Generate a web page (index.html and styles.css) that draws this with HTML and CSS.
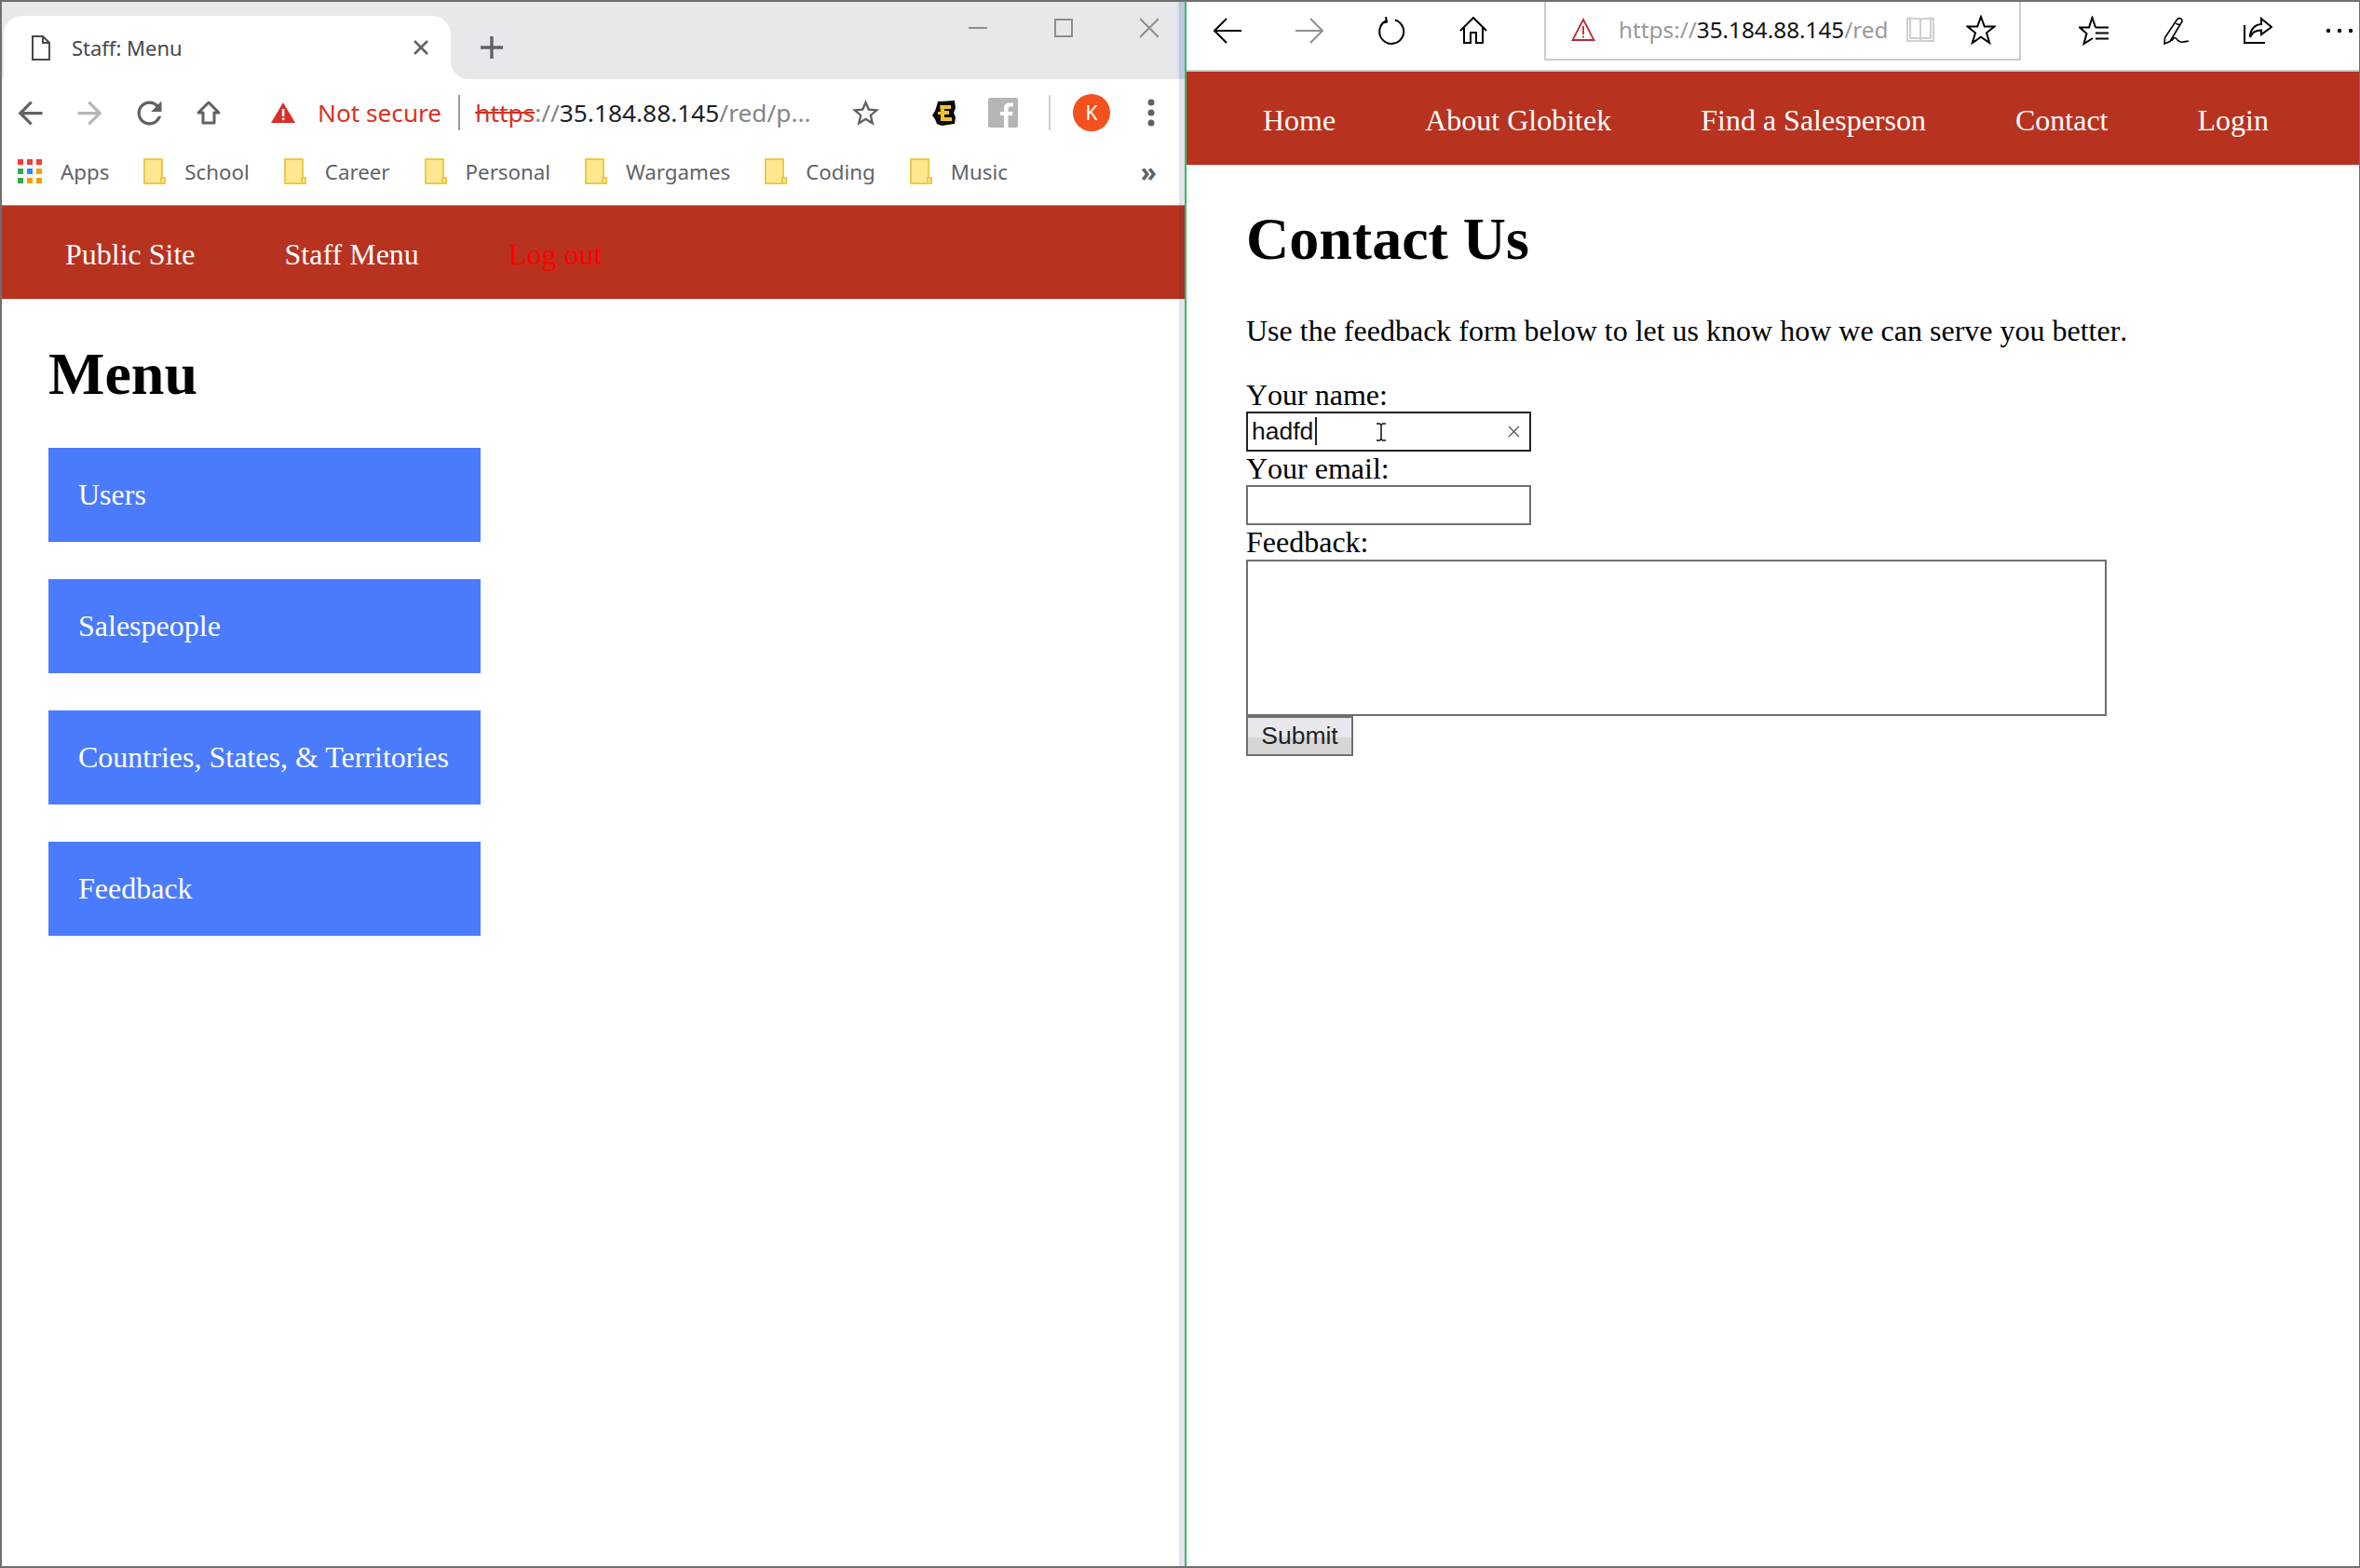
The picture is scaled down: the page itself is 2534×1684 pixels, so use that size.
FILE: index.html
```html
<!DOCTYPE html>
<html lang="en">
<head>
    <meta charset="UTF-8">
    <title>Staff: Menu / Contact Us</title>
    <link rel="stylesheet" href="styles.css">
</head>
<body>
<div class="screen">

    <!-- left window: chrome -->
    <div class="win-left">
        <div class="tabstrip">
            <div class="tab">
                <svg class="tab-doc" width="20" height="27" viewBox="0 0 20 27"><path d="M1 1H12L19 8V26H1ZM12 1V8H19" fill="none" stroke="#45484c" stroke-width="2"/></svg>
                <span class="tab-title">Staff: Menu</span>
                <svg class="tab-close" width="16" height="16" viewBox="0 0 16 16"><path d="M1 1L15 15M15 1L1 15" stroke="#5f6368" stroke-width="2.6"/></svg>
            </div>
            <svg class="tab-new" width="24" height="24" viewBox="0 0 24 24"><path d="M12 0V24M0 12H24" stroke="#5f6368" stroke-width="3.4"/></svg>
            <div class="win-controls">
                <svg width="20" height="40" viewBox="0 0 20 40"><path d="M0 20H20" stroke="#8c8e92" stroke-width="2"/></svg>
                <svg width="20" height="40" viewBox="0 0 20 40"><rect x="1" y="11" width="18" height="18" fill="none" stroke="#8c8e92" stroke-width="2"/></svg>
                <svg width="20" height="40" viewBox="0 0 20 40"><path d="M0 10L20 30M20 10L0 30" stroke="#8c8e92" stroke-width="2"/></svg>
            </div>
        </div>

        <div class="toolbar">
            <div class="tool-btn"><svg width="39" height="39" viewBox="0 0 24 24"><path fill="#5f6368" d="M20 11H7.83l5.59-5.59L12 4l-8 8 8 8 1.41-1.41L7.83 13H20v-2z"/></svg></div>
            <div class="tool-btn"><svg class="flip" width="39" height="39" viewBox="0 0 24 24"><path fill="#b5b6b8" d="M20 11H7.83l5.59-5.59L12 4l-8 8 8 8 1.41-1.41L7.83 13H20v-2z"/></svg></div>
            <div class="tool-btn"><svg width="39" height="39" viewBox="0 0 24 24"><path fill="#5f6368" d="M17.65 6.35C16.2 4.9 14.21 4 12 4c-4.42 0-7.99 3.58-7.99 8s3.57 8 7.99 8c3.73 0 6.84-2.55 7.73-6h-2.08c-.82 2.33-3.04 4-5.65 4-3.31 0-6-2.69-6-6s2.69-6 6-6c1.66 0 3.14.69 4.22 1.78L13 11h7V4l-2.35 2.35z"/></svg></div>
            <div class="tool-btn"><svg width="28" height="28" viewBox="0 0 28 28"><path d="M14 3L3 14H8V25H20V14H25Z" fill="none" stroke="#5f6368" stroke-width="3" stroke-linejoin="round"/></svg></div>

            <div class="omnibox">
                <svg width="26" height="22" viewBox="0 0 26 22"><path d="M13 0L26 22H0Z" fill="#d93025"/><rect x="11.8" y="7" width="2.6" height="8" fill="#fff"/><rect x="11.8" y="16.5" width="2.6" height="2.6" fill="#fff"/></svg>
                <span class="not-secure">Not secure</span>
                <span class="omni-sep"></span>
                <span class="url"><span class="url-https">https</span><span class="url-dim">://</span>35.184.88.145<span class="url-dim">/red/p...</span></span>
            </div>

            <div class="tool-btn tool-star"><svg width="35" height="35" viewBox="0 0 24 24"><path fill="#5f6368" d="M22 9.24l-7.19-.62L12 2 9.19 8.63 2 9.24l5.46 4.73L5.82 21 12 17.27 18.18 21l-1.63-7.03L22 9.24zM12 15.4l-3.76 2.27 1-4.28-3.32-2.88 4.38-.38L12 6.1l1.71 4.04 4.38.38-3.32 2.88 1 4.28L12 15.4z"/></svg></div>
            <div class="tool-btn tool-ext"><svg width="25" height="27" viewBox="0 0 25 27"><path d="M6 1L24 0L25 8L23 13L25 18L24 25L10 27L5 25L3 20L0 16L3 11L5 5Z" fill="#0b0b0b"/><path d="M8 5H20V9H13V11H18V15H13V18H21V22H9V15H6V12H9Z" fill="#f0c22d"/></svg></div>
            <div class="tool-btn"><svg width="32" height="32" viewBox="0 0 32 32"><rect width="32" height="32" rx="2" fill="#b5b5b5"/><path d="M17 32V19H13V15H17V11C17 7 19.500 5.500 23 5.500H27V9.500H24C22 9.500 21.500 10.300 21.500 12V15H26.500L26 19H21.500V32Z" fill="#fff"/></svg></div>
            <span class="tool-sep"></span>
            <div class="avatar">K</div>
            <div class="tool-btn tool-more"><svg width="8" height="32" viewBox="0 0 8 32"><circle cx="4" cy="5" r="3.500" fill="#5f6368"/><circle cx="4" cy="16" r="3.500" fill="#5f6368"/><circle cx="4" cy="27" r="3.500" fill="#5f6368"/></svg></div>
        </div>

        <div class="bookmarks">
            <div class="bookmark">
                <svg width="26" height="26" viewBox="0 0 26 26">
                    <rect x="0" y="0" width="6" height="6" fill="#ef3e36"/><rect x="10" y="0" width="6" height="6" fill="#ef3e36"/><rect x="20" y="0" width="6" height="6" fill="#ef3e36"/>
                    <rect x="0" y="10" width="6" height="6" fill="#34a853"/><rect x="10" y="10" width="6" height="6" fill="#2a8af0"/><rect x="20" y="10" width="6" height="6" fill="#f29f05"/>
                    <rect x="0" y="20" width="6" height="6" fill="#34a853"/><rect x="10" y="20" width="6" height="6" fill="#f29f05"/><rect x="20" y="20" width="6" height="6" fill="#f29f05"/>
                </svg>
                Apps
            </div>
            <div class="bookmark"><svg class="folder" width="24" height="28" viewBox="0 0 24 28"><use href="#folder"/></svg>School</div>
            <div class="bookmark"><svg class="folder" width="24" height="28" viewBox="0 0 24 28"><use href="#folder"/></svg>Career</div>
            <div class="bookmark"><svg class="folder" width="24" height="28" viewBox="0 0 24 28"><use href="#folder"/></svg>Personal</div>
            <div class="bookmark"><svg class="folder" width="24" height="28" viewBox="0 0 24 28"><use href="#folder"/></svg>Wargames</div>
            <div class="bookmark"><svg class="folder" width="24" height="28" viewBox="0 0 24 28"><use href="#folder"/></svg>Coding</div>
            <div class="bookmark"><svg class="folder" width="24" height="28" viewBox="0 0 24 28"><use href="#folder"/></svg>Music</div>
            <span class="more-bookmarks">»</span>
        </div>

        <nav class="nav nav-staff">
            <a>Public Site</a>
            <a>Staff Menu</a>
            <a class="logout">Log out</a>
        </nav>

        <main class="page-left">
            <h1>Menu</h1>
            <a class="menu-item">Users</a>
            <a class="menu-item">Salespeople</a>
            <a class="menu-item">Countries, States, &amp; Territories</a>
            <a class="menu-item">Feedback</a>
        </main>

        <div class="win-edge"></div>
    </div>

    <!-- right window: edge -->
    <div class="win-right">
        <div class="edge-toolbar">
            <div class="edge-btn"><svg width="32" height="30" viewBox="0 0 32 30"><path d="M2 15H31M15 2L2 15L15 28" fill="none" stroke="#000" stroke-width="2"/></svg></div>
            <div class="edge-btn"><svg class="flip" width="32" height="30" viewBox="0 0 32 30"><path d="M2 15H31M15 2L2 15L15 28" fill="none" stroke="#8f8f8f" stroke-width="2"/></svg></div>
            <div class="edge-btn"><svg width="30" height="30" viewBox="0 0 30 30"><path d="M19 3.500A13 13 0 1 1 9 4.500M9 0L10 5.500L4.500 7" fill="none" stroke="#000" stroke-width="2"/></svg></div>
            <div class="edge-btn"><svg width="32" height="30" viewBox="0 0 32 30"><path d="M2 15L16 1L30 15M6 12V28H13V17H19V28H26V12" fill="none" stroke="#000" stroke-width="2"/></svg></div>

            <div class="edge-address">
                <svg width="26" height="26" viewBox="0 0 26 26"><path d="M13 2L24.500 24H1.500Z" fill="none" stroke="#b92b30" stroke-width="1.800"/><path d="M13 9V18M13 19.500V21.500" stroke="#b92b30" stroke-width="1.800"/></svg>
                <span class="edge-url"><span class="url-dim-edge">https://</span>35.184.88.145<span class="url-dim-edge">/red</span></span>
                <svg class="edge-book" width="32" height="30" viewBox="0 0 32 30"><path d="M2 3H13C15 3 16 4 16 5C16 4 17 3 19 3H30V27H2ZM16 5V28M5 1V24H14C15 24 16 25 16 25C16 25 17 24 18 24H27V1" fill="none" stroke="#cfcfcf" stroke-width="2"/></svg>
                <svg class="edge-star" width="32" height="32" viewBox="0 0 32 32"><path d="M16 2L19.800 12.500H30.500L22 19.300L25.200 30L16 23.600L6.800 30L10 19.300L1.500 12.500H12.200Z" fill="none" stroke="#000" stroke-width="2"/></svg>
            </div>

            <div class="edge-right">
                <div class="edge-btn"><svg width="32" height="32" viewBox="0 0 32 32"><path d="M18 12.500L14.500 2L11 12.500H1L8.500 19L5.500 30L15 24M18 12.500H32M18 18.500H32M18 24.500H32" fill="none" stroke="#000" stroke-width="2"/></svg></div>
                <div class="edge-btn"><svg width="30" height="30" viewBox="0 0 30 30"><path d="M16.500 3C18 0.500 22.500 1.500 22 5L9 26.500L3 29L3.500 22.500ZM14.500 6.500L20 9.500M11 26C13 21 15 22 17 25C20 28.500 24 27 29 26" fill="none" stroke="#000" stroke-width="1.600"/></svg></div>
                <div class="edge-btn"><svg width="32" height="30" viewBox="0 0 32 30"><path d="M2 9V28H24M20 2L31 11L20 19V14.500C14 14.500 10 16.500 8 22C8 13.500 13 8.500 20 8Z" fill="none" stroke="#000" stroke-width="2"/></svg></div>
                <div class="edge-btn edge-more"><svg width="30" height="6" viewBox="0 0 30 6"><circle cx="3" cy="3" r="2.200"/><circle cx="15" cy="3" r="2.200"/><circle cx="27" cy="3" r="2.200"/></svg></div>
            </div>
        </div>

        <nav class="nav nav-public">
            <a>Home</a>
            <a>About Globitek</a>
            <a>Find a Salesperson</a>
            <a>Contact</a>
            <a>Login</a>
        </nav>

        <main class="page-right">
            <h1>Contact Us</h1>
            <p class="intro">Use the feedback form below to let us know how we can serve you better.</p>
            <form class="feedback">
                <label for="name">Your name:</label>
                <div class="name-field">
                    <input class="field field-focus" id="name" type="text" value="hadfd">
                    <span class="caret"></span>
                    <svg class="ibeam" width="12" height="20" viewBox="0 0 12 20"><path d="M1 1H4.500L6 2.500L7.500 1H11M6 2.500V17.500M1 19H4.500L6 17.500L7.500 19H11" fill="none" stroke="#111" stroke-width="1.500"/></svg>
                    <svg class="clear-x" width="13" height="13" viewBox="0 0 13 13"><path d="M1 1L12 12M12 1L1 12" stroke="#555" stroke-width="1.300"/></svg>
                </div>
                <label for="email">Your email:</label>
                <input class="field" id="email" type="text">
                <label for="msg">Feedback:</label>
                <textarea class="msg" id="msg"></textarea>
                <button class="submit" type="button">Submit</button>
            </form>
        </main>
    </div>
</div>

<svg class="defs" width="0" height="0">
    <symbol id="folder" viewBox="0 0 24 28">
        <path d="M1 1H20V21H23V27H1Z" fill="#fee78f" stroke="#ecc94b" stroke-width="2"/>
        <path d="M19 27V21H23" fill="none" stroke="#ecc94b" stroke-width="2"/>
    </symbol>
</svg>
</body>
</html>
```

FILE: styles.css
```css
* {
    box-sizing: border-box;
}
html, body {
    margin: 0;
    background: #ffffff;
}
.screen {
    display: flex;
    width: 2534px;
    height: 1684px;
    overflow: hidden;
    border-top: 2px solid #6f6f6f;
    border-bottom: 2px solid #6f6f6f;
    border-right: 1px solid #6f6f6f;
    font-family: "Liberation Serif", serif;
}
.defs {
    position: absolute;
}
.flip {
    transform: scaleX(-1);
}

/* left window */
.win-left {
    position: relative;
    width: 1274px;
    flex-shrink: 0;
    border-left: 2px solid #6f6f6f;
    border-right: 2px solid #2fbf62;
}
.win-edge {
    position: absolute;
    top: 0;
    right: 0;
    bottom: 0;
    width: 6px;
    background: rgba(40, 40, 90, 0.13);
}
.tabstrip {
    position: relative;
    display: flex;
    height: 83px;
    padding-left: 2px;
    background: #e7e8ec;
    font-family: "Noto Sans", sans-serif;
}
.tabstrip::after {
    content: "";
    position: absolute;
    top: 0;
    right: 0;
    bottom: 0;
    width: 8px;
    background: #d6e0ef;
}
.tab {
    position: relative;
    display: flex;
    align-items: center;
    width: 480px;
    height: 68px;
    margin-top: 15px;
    padding: 0 24px 0 30px;
    background: #ffffff;
    border-radius: 20px 20px 0 0;
}
.tab::after {
    content: "";
    position: absolute;
    left: 100%;
    bottom: 0;
    width: 20px;
    height: 20px;
    background: radial-gradient(circle at 100% 0, #e7e8ec 20px, #ffffff 20.5px);
}
.tab-title {
    margin-left: 23px;
    font-size: 22px;
    color: #45484c;
}
.tab-close {
    margin-left: auto;
}
.tab-new {
    margin: 37px 0 0 32px;
}
.win-controls {
    display: flex;
    gap: 72px;
    margin: 8px 0 0 auto;
    padding-right: 28px;
    height: 40px;
}

.toolbar {
    display: flex;
    align-items: center;
    height: 72px;
    margin-left: -2px;
    font-family: "Noto Sans", sans-serif;
}
.tool-btn {
    display: flex;
    align-items: center;
    justify-content: center;
    flex-shrink: 0;
    width: 64px;
    height: 64px;
}
.omnibox {
    display: flex;
    align-items: center;
    flex-shrink: 0;
    width: 606px;
    margin-left: 35px;
}
.not-secure {
    margin-left: 24px;
    font-size: 26.200px;
    color: #d93025;
}
.omni-sep {
    width: 2px;
    height: 38px;
    margin: 0 16px 0 18px;
    background: #9a9a9a;
}
.url {
    font-size: 26.300px;
    color: #202124;
    white-space: nowrap;
}
.url-https {
    color: #d93025;
    text-decoration: line-through;
}
.url-dim {
    color: #80868b;
}
.tool-ext {
    margin-left: 20px;
}
.tool-sep {
    flex-shrink: 0;
    width: 2px;
    height: 38px;
    margin-left: 17px;
    background: #cdd0d4;
}
.avatar {
    display: flex;
    align-items: center;
    justify-content: center;
    flex-shrink: 0;
    width: 40px;
    height: 40px;
    margin-left: 24px;
    border-radius: 50%;
    background: #f4511e;
    color: #ffffff;
    font-size: 21px;
}
.tool-more {
    margin-left: 12px;
}

.bookmarks {
    display: flex;
    align-items: center;
    height: 63px;
    padding: 0 30px 9px 17px;
    font-family: "Noto Sans", sans-serif;
    font-size: 22.300px;
    color: #5f6368;
}
.bookmark {
    display: flex;
    align-items: center;
    gap: 20px;
    margin-right: 37px;
}
.more-bookmarks {
    margin-left: auto;
    font-size: 28px;
    font-weight: 700;
    line-height: 1;
}

/* red nav, same on both pages */
.nav {
    display: flex;
    align-items: center;
    height: 100px;
    padding-top: 5px;
    background: #b83220;
    font-size: 32px;
    color: #ffffff;
}
.nav a {
    padding: 0 48px;
}
.nav-staff {
    padding-left: 20px;
    border-top: 1px solid #a0a0a0;
    height: 101px;
}
.nav-public {
    padding-left: 34px;
}
.logout {
    color: #ff0000;
}

.page-left {
    padding: 44px 0 0 50px;
}
h1 {
    margin: 0;
    font-size: 64px;
    line-height: 74px;
    font-weight: 700;
    color: #000000;
}
.page-left h1 {
    margin-bottom: 42px;
}
.menu-item {
    display: flex;
    align-items: center;
    width: 464px;
    height: 101px;
    margin-bottom: 40px;
    padding: 0 32px;
    background: #4a7bfc;
    color: #ffffff;
    font-size: 32px;
}

/* right window */
.win-right {
    flex: 1;
    min-width: 0;
}
.edge-toolbar {
    display: flex;
    height: 75px;
    border-bottom: 2px solid #c8c8c8;
    font-family: "Noto Sans", sans-serif;
}
.edge-btn {
    display: flex;
    align-items: center;
    justify-content: center;
    flex-shrink: 0;
    width: 88px;
    height: 62px;
}
.edge-address {
    display: flex;
    align-items: center;
    flex-shrink: 0;
    width: 512px;
    height: 63px;
    margin-left: 32px;
    padding: 0 10px 2px 27px;
    border: 2px solid #cccccc;
    border-top: 0;
}
.edge-url {
    margin-left: 25px;
    font-size: 24.300px;
    white-space: nowrap;
    color: #111111;
}
.url-dim-edge {
    color: #9a9a9a;
}
.edge-book {
    margin-left: auto;
}
.edge-star {
    margin-left: 33px;
    margin-right: 15px;
}
.edge-right {
    display: flex;
    margin-left: 34px;
}
.edge-more {
    width: 65px;
    justify-content: flex-start;
    padding-left: 29px;
}

.page-right {
    padding: 43px 0 0 64px;
    font-kerning: none;
}
.intro {
    margin: 43px 0 33px;
    font-size: 32px;
    line-height: 36px;
    color: #000000;
}
.feedback {
    display: flex;
    flex-direction: column;
    align-items: flex-start;
    font-size: 32px;
}
.feedback label {
    height: 36px;
    line-height: 36px;
}
.name-field {
    position: relative;
    height: 43px;
}
.field {
    display: block;
    width: 306px;
    height: 43px;
    padding: 0 4px;
    border: 2px solid #6f6f6f;
    border-radius: 0;
    outline: 0;
    background: #ffffff;
    font-family: "Liberation Sans", sans-serif;
    font-size: 26.500px;
    color: #111111;
}
.field-focus {
    border-color: #222222;
}
.caret {
    position: absolute;
    left: 74px;
    top: 6px;
    width: 2px;
    height: 30px;
    background: #222222;
}
.ibeam {
    position: absolute;
    left: 139px;
    top: 12px;
}
.clear-x {
    position: absolute;
    left: 281px;
    top: 15px;
}
.msg {
    display: block;
    width: 924px;
    height: 168px;
    margin-top: 1px;
    border: 2px solid #6f6f6f;
    border-radius: 0;
    outline: 0;
    resize: none;
}
.submit {
    width: 115px;
    height: 43px;
    padding: 0;
    border: 2px solid #6f6f6f;
    border-radius: 0;
    background: linear-gradient(#e8e8ec 53%, #d6d6d6 53%);
    font-family: "Liberation Sans", sans-serif;
    font-size: 26.500px;
    color: #222222;
}
```
